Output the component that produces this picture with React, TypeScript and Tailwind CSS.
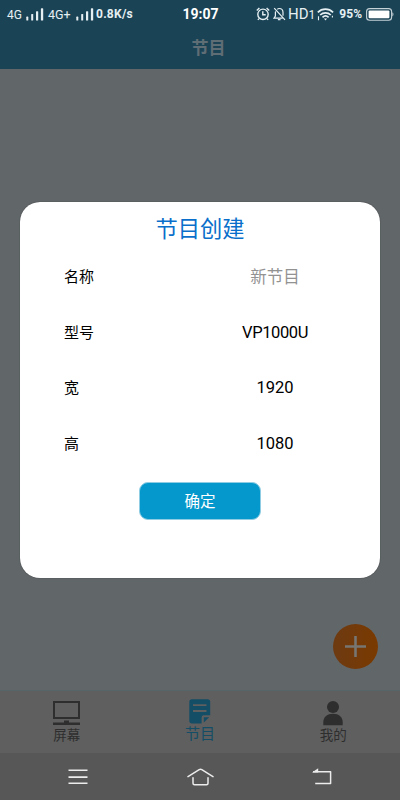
interface Field {
  id: number;
  label: string;
  value: string;
  className: string;
}

const fields: Field[] = [
  { id: 1, label: "名称", value: "新节目", className: "pt-[4px] text-[16.5px] text-[#929292]" },
  { id: 2, label: "型号", value: "VP1000U", className: "pt-[2px] text-[16.5px] tracking-[-0.4px]" },
  { id: 3, label: "宽", value: "1920", className: "pt-[2px] text-[16.5px]" },
  { id: 4, label: "高", value: "1080", className: "pt-[2px] text-[16.5px]" },
];

const Signal = () => (
  <svg width="18" height="13" viewBox="0 0 18 13" fill="#e6f0f3" className="shrink-0">
    <rect x="0.3" y="8.6" width="2" height="4" rx="0.6" />
    <rect x="5.2" y="6" width="2" height="6.6" rx="0.6" />
    <rect x="10" y="3.2" width="2.2" height="9.4" rx="0.6" />
    <rect x="14.9" y="0.3" width="2.3" height="12.3" rx="0.6" />
  </svg>
);

const AlarmIcon = () => (
  <svg width="14" height="14" viewBox="0 0 14 14" fill="none" stroke="#e6f0f3" strokeWidth="1.4">
    <circle cx="7" cy="7.3" r="5.2" />
    <path d="M6.8 4.3v3.4h2.9M0.8 3.4 3.4 1M13.2 3.4 10.6 1M3 11.6l-1.1 1.3M11 11.6l1.1 1.3" />
  </svg>
);

const MuteIcon = () => (
  <svg width="13" height="14" viewBox="0 0 13 14" fill="none" stroke="#e6f0f3" strokeWidth="1.2">
    <path d="M4.3 2.3C5 1.6 5.6 1.5 6.2 1.5c2.3 0 3.8 1.6 3.8 4v3.2M2.6 4.4C2.4 5 2.4 5.5 2.4 6v3L1 11.1h8.6M4.9 12.7h2.6M1.2 1.2 12 12.8" />
  </svg>
);

const WifiIcon = () => (
  <svg width="17" height="13" viewBox="0 0 17 13" fill="none" stroke="#e6f0f3" strokeWidth="1.7">
    <path d="M0.8 4.3c4.3-4.2 11-4.2 15.3 0M3.2 7c3-2.9 7.6-2.9 10.6 0M5.5 9.4c1.8-1.7 4.3-1.7 6.1 0" />
    <path d="M6.9 10.6h3.2L8.5 12.5z" fill="#e6f0f3" stroke="none" />
    <path d="M1.5 8.3v4M15.4 7.8v1.7" strokeWidth="1.1" />
  </svg>
);

const BatteryIcon = () => (
  <svg width="28" height="13" viewBox="0 0 28 13" fill="none">
    <rect x="0.6" y="0.6" width="25" height="11.6" rx="3" stroke="#c5d2d7" strokeWidth="1.1" />
    <rect x="2.6" y="2.5" width="20.8" height="7.8" rx="1" fill="#fff" />
    <path d="M26.4 4.3c1.4 0.7 1.4 3.5 0 4.2z" fill="#c5d2d7" />
  </svg>
);

const StatusBar = () => (
  <div className="grid h-7 grid-cols-[1fr_auto_1fr] items-center pl-[7px] pr-[6px] text-[#e6f0f3]">
    <div className="flex items-center whitespace-nowrap">
      <span className="w-[19px] shrink-0 text-[12px] leading-none pt-[2px]">4G</span>
      <Signal />
      <span className="ml-[4px] w-[28px] shrink-0 text-[12.5px] leading-none pt-[2px]">4G+</span>
      <Signal />
      <span className="ml-[2px] text-[12px] font-bold leading-none tracking-[0.25px]">0.8K/s</span>
    </div>
    <span className="text-[14px] font-bold leading-none text-white">19:07</span>
    <div className="flex items-center justify-end whitespace-nowrap">
      <AlarmIcon />
      <span className="ml-[3px]"><MuteIcon /></span>
      <span className="ml-[2px] flex items-baseline pt-px text-[15px] leading-none">HD<span className="text-[12px]">1</span></span>
      <span className="ml-[2px]"><WifiIcon /></span>
      <span className="ml-[5px] mr-[4px] text-[12px] font-bold leading-none">95%</span>
      <BatteryIcon />
    </div>
  </div>
);

const TabBar = () => (
  <nav className="grid h-[63px] grid-cols-3 border-t border-[#586568] bg-[#5f5f5f] text-[13.5px] leading-[18px] text-[#2e2e2e]">
    <div className="flex flex-col items-center pt-[10px]">
      <svg width="27" height="25" viewBox="0 0 27 25">
        <rect x="1" y="1" width="25" height="16" fill="none" stroke="#2e2e2e" strokeWidth="2" />
        <path d="M11 19.4h5v2h-5zM0 21.6h27v2.4H0z" fill="#2e2e2e" />
      </svg>
      屏幕
    </div>
    <div className="flex flex-col items-center pt-[8px] text-[15px] text-[#134d66]">
      <svg width="22" height="25" viewBox="0 0 22 25" className="mb-px">
        <path d="M3 0.3h15.5a2.7 2.7 0 0 1 2.7 2.7v13.2h-6.4a2.2 2.2 0 0 0-2.2 2.2v6H3a2.7 2.7 0 0 1-2.7-2.7V3A2.7 2.7 0 0 1 3 0.3z" fill="#134d66" />
        <path d="M14.8 18.2h5.4l-5.4 5.4z" fill="#134d66" />
        <path d="M4 6.2h13.5M4 12h13.5" stroke="#5f5f5f" strokeWidth="1.8" />
      </svg>
      节目
    </div>
    <div className="flex flex-col items-center pt-[10px]">
      <svg width="20" height="25" viewBox="0 0 20 25" fill="#2e2e2e">
        <circle cx="10" cy="6" r="6" />
        <path d="M0.3 24.3V21c0-4.8 4-8.2 9.7-8.2s9.7 3.4 9.7 8.2v3.3z" />
      </svg>
      我的
    </div>
  </nav>
);

const SystemBar = () => (
  <div className="flex h-[47px] items-center bg-[#575757]">
    <svg width="20" height="16" viewBox="0 0 20 16" className="ml-[68px]" stroke="#ececec" strokeWidth="1.6">
      <path d="M0.5 1.3h19M0.5 8.1h19M0.5 14.3h19" />
    </svg>
    <svg width="27" height="18" viewBox="0 0 27 18" className="ml-[99px]" fill="none" stroke="#ececec" strokeWidth="1.5" strokeLinecap="round" strokeLinejoin="round">
      <path d="M1 8.6 12.2 1.6q1.3-.7 2.6 0L26 8.6M6 9.8v5.4q0 1.5 1.5 1.5h12q1.5 0 1.5-1.5V9.8" />
    </svg>
    <svg width="20" height="17" viewBox="0 0 20 17" className="ml-[98px]" fill="none" stroke="#ececec" strokeWidth="1.5">
      <path d="M1 3.7h17.6v11.7H3.2" strokeLinejoin="round" />
      <path d="M0 4.4 6.2 0.2v4.2z" fill="#ececec" stroke="none" />
    </svg>
  </div>
);

const CreateDialog = () => (
  <div className="absolute inset-x-5 top-[133px] h-[376px] rounded-[20px] bg-white shadow-[0_0_1px_#222]">
    <h2 className="pt-[10px] text-center text-[22.3px] leading-[34px] text-[#0a6fca]">节目创建</h2>
    <div className="mt-[3px]">
      {fields.map((field) => (
        <div key={field.id} className="flex h-[55.5px] items-center pl-[44px] pr-[30px] text-black">
          <span className="w-[136px] pt-px text-[15px]">{field.label}</span>
          <span className={`flex-1 text-center ${field.className}`}>{field.value}</span>
        </div>
      ))}
    </div>
    <button className="mx-auto mt-[11px] flex h-[38px] w-[122px] items-center justify-center rounded-[9px] border border-[#8fcde4] bg-[#0598cc] pt-[4px] text-[15.5px] text-white">
      确定
    </button>
  </div>
);

export default function App() {
  return (
    <div className="flex h-[800px] w-[400px] flex-col overflow-hidden bg-[#616669] font-['Roboto','Noto_Sans_CJK_SC',sans-serif]">
      <header className="h-[69px] bg-[#1b4356]">
        <StatusBar />
        <h1 className="pl-[17px] text-center text-[17px] font-bold leading-[41px] text-[#5f6d75]">节目</h1>
      </header>
      <main className="relative flex-1">
        <button className="absolute bottom-[21px] right-[22px] flex size-[45px] items-center justify-center rounded-full bg-linear-to-r from-[#6d3a11] to-[#7a3a00]">
          <svg width="21" height="21" viewBox="0 0 21 21" stroke="#777672" strokeWidth="2.6">
            <path d="M10.5 0v21M0 10.5h21" />
          </svg>
        </button>
        <CreateDialog />
      </main>
      <TabBar />
      <SystemBar />
    </div>
  );
}
